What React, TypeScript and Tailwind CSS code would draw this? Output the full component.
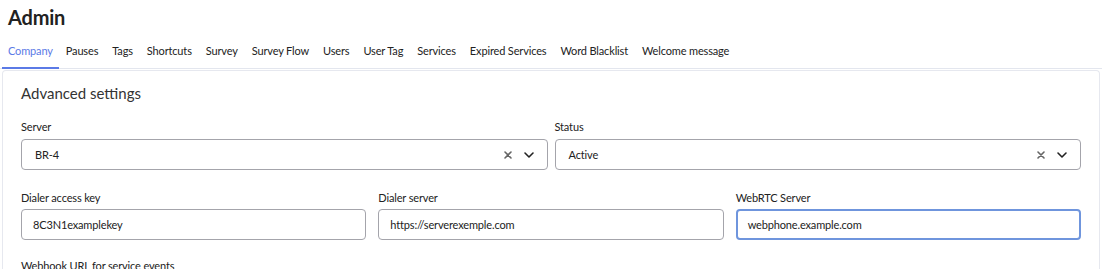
import React from "react";

const tabs = [
  "Company",
  "Pauses",
  "Tags",
  "Shortcuts",
  "Survey",
  "Survey Flow",
  "Users",
  "User Tag",
  "Services",
  "Expired Services",
  "Word Blacklist",
  "Welcome message",
];

function Chevron() {
  return (
    <svg width="12" height="12" viewBox="0 0 12 12" fill="none">
      <path d="M2 4 L6 8 L10 4" stroke="#222" strokeWidth="1.6" strokeLinecap="round" strokeLinejoin="round" />
    </svg>
  );
}

function Cross() {
  return (
    <svg width="8" height="8" viewBox="0 0 8 8" fill="none">
      <path d="M1 1 L7 7 M7 1 L1 7" stroke="#666" strokeWidth="1.6" strokeLinecap="round" />
    </svg>
  );
}

const txt = "text-[11px] tracking-[-0.15px] text-[#222] leading-[16px]";

function Select({ label, value }: { label: string; value: string }) {
  return (
    <div className="flex flex-col">
      <div className={`${txt} mb-[4px]`}>{label}</div>
      <div className="h-[31px] border border-[#a4a4ab] rounded-[4px] flex items-center pl-[13px] pr-[12px]">
        <span className={`${txt} flex-1`}>{value}</span>
        <span className="mr-[11px] flex items-center"><Cross /></span>
        <span className="flex items-center"><Chevron /></span>
      </div>
    </div>
  );
}

function Input({ label, value, focused }: { label: string; value: string; focused?: boolean }) {
  return (
    <div className="flex flex-col">
      <div className={`${txt} mb-[3px]`}>{label}</div>
      <div
        className={
          focused
            ? "h-[31px] border-2 border-[#6f95dd] rounded-[4px] flex items-center pl-[10px]"
            : "h-[31px] border border-[#a4a4ab] rounded-[4px] flex items-center pl-[11px]"
        }
      >
        <span className={txt}>{value}</span>
      </div>
    </div>
  );
}

export default function App() {
  return (
    <div className="w-[1102px] h-[269px] overflow-hidden bg-white" style={{ fontFamily: 'Lato, "Noto Sans", sans-serif' }}>
      <div className="pl-[8px] pt-[4px] text-[20px] font-bold text-[#222] leading-[26px] tracking-[-0.2px]">Admin</div>
      <div className="mt-[13px] flex border-b border-[#e3e6ee] pl-[2px]">
        {tabs.map((t, i) => (
          <div
            key={t}
            className={
              i === 0
                ? "px-[6px] pb-[8px] text-[11px] tracking-[-0.15px] text-[#5b7ae6] border-b-2 border-[#5b7ae6] -mb-[1px] leading-[16px]"
                : "px-[7px] pb-[8px] text-[11px] tracking-[-0.15px] text-[#222] leading-[16px]"
            }
          >
            {t}
          </div>
        ))}
      </div>
      <div className="mx-[2px] mt-[1px] border-l border-r border-t border-[#e6e8ef] rounded-t-[4px] pl-[18px] pr-[18px] pt-[11px]">
        <div className="text-[15px] text-[#333] leading-[22px]">Advanced settings</div>
        <div className="grid grid-cols-2 gap-x-[7px] mt-[15px]">
          <Select label="Server" value="BR-4" />
          <Select label="Status" value="Active" />
        </div>
        <div className="grid grid-cols-3 gap-x-[12px] mt-[20px]">
          <Input label="Dialer access key" value="8C3N1examplekey" />
          <Input label="Dialer server" value="https://serverexemple.com" />
          <Input label="WebRTC Server" value="webphone.example.com" focused />
        </div>
        <div className={`mt-[18px] ${txt}`}>Webhook URL for service events</div>
      </div>
    </div>
  );
}
